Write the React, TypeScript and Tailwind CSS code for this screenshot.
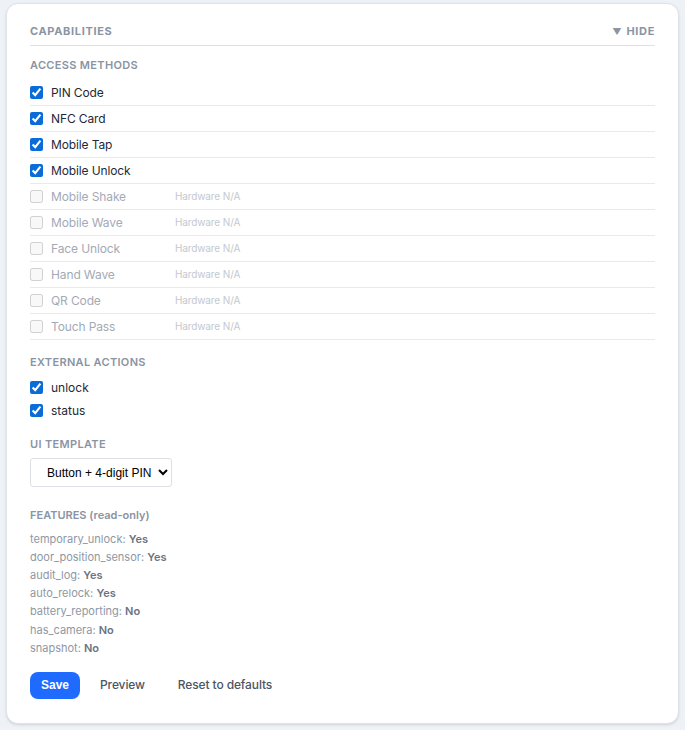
import React from "react";

const methods = [
  { name: "PIN Code", on: true },
  { name: "NFC Card", on: true },
  { name: "Mobile Tap", on: true },
  { name: "Mobile Unlock", on: true },
  { name: "Mobile Shake", on: false },
  { name: "Mobile Wave", on: false },
  { name: "Face Unlock", on: false },
  { name: "Hand Wave", on: false },
  { name: "QR Code", on: false },
  { name: "Touch Pass", on: false },
];

const features = [
  ["temporary_unlock", "Yes"],
  ["door_position_sensor", "Yes"],
  ["audit_log", "Yes"],
  ["auto_relock", "Yes"],
  ["battery_reporting", "No"],
  ["has_camera", "No"],
  ["snapshot", "No"],
];

function SectionTitle({ children }: { children: React.ReactNode }) {
  return (
    <div className="text-[11px] font-semibold uppercase tracking-[0.03em] text-[#8a94a3]">
      {children}
    </div>
  );
}

export default function App() {
  return (
    <div
      className="min-h-[730px] bg-[#eef1f6] px-[6px] pt-[3px] pb-[6px]"
      style={{ fontFamily: "Inter, 'Noto Sans', sans-serif" }}
    >
      <div className="rounded-xl border border-[#dfe3ea] bg-white px-[23px] pt-[19px] pb-[24px] shadow-sm">
        <div className="flex items-center justify-between border-b border-[#dde1e7] pb-[5px]">
          <div className="text-[11px] font-bold uppercase tracking-[0.06em] text-[#8a94a3]">
            Capabilities
          </div>
          <button className="text-[11px] font-bold uppercase tracking-[0.06em] text-[#8a94a3]">
            <span className="mr-1 text-[9px]">▼</span>Hide
          </button>
        </div>

        <div className="mt-[11px]">
          <SectionTitle>Access methods</SectionTitle>
          <div className="mt-[7px]">
            {methods.map((m) => (
              <label
                key={m.name}
                className="flex h-[26px] items-center border-b border-[#e6e9ee] text-[12px] tracking-[-0.01em]"
              >
                <input
                  type="checkbox"
                  defaultChecked={m.on}
                  disabled={!m.on}
                  className="m-0 h-[13px] w-[13px] accent-[#0b6bd8]"
                />
                <span
                  className={
                    "ml-2 w-[124px] " + (m.on ? "text-[#1f2937]" : "text-[#a3aab5]")
                  }
                >
                  {m.name}
                </span>
                {!m.on && (
                  <span className="text-[10px] text-[#c3c8d0]">Hardware N/A</span>
                )}
              </label>
            ))}
          </div>
        </div>

        <div className="mt-[14px]">
          <SectionTitle>External actions</SectionTitle>
          <div className="mt-[9px] flex flex-col gap-[7px]">
            {["unlock", "status"].map((a) => (
              <label key={a} className="flex h-[16px] items-center text-[12px] text-[#1f2937]">
                <input
                  type="checkbox"
                  defaultChecked
                  className="m-0 h-[13px] w-[13px] accent-[#0b6bd8]"
                />
                <span className="ml-2">{a}</span>
              </label>
            ))}
          </div>
        </div>

        <div className="mt-[17px]">
          <SectionTitle>UI template</SectionTitle>
          <select
            defaultValue="pin"
            className="mt-[6px] h-[29px] rounded-[3px] border border-[#dcdfe4] bg-white pl-[12px] pr-[3px] text-[12px] text-black"
            style={{ fontFamily: "'Liberation Sans', Arial, sans-serif" }}
          >
            <option value="pin">Button + 4-digit PIN</option>
          </select>
        </div>

        <div className="mt-[20px]">
          <div className="text-[11px] font-semibold text-[#8a94a3]">FEATURES (read-only)</div>
          <div className="mt-[6px] flex flex-col text-[11px] leading-[18.2px] text-[#8f97a3]">
            {features.map(([k, v]) => (
              <div key={k}>
                {k}: <span className="font-semibold text-[#6b7483]">{v}</span>
              </div>
            ))}
          </div>
        </div>

        <div className="mt-[15px] flex items-center">
          <button
            className="h-[27px] rounded-lg bg-[#1f6bff] px-[11px] text-[12px] font-bold text-white"
            style={{ fontFamily: "'Liberation Sans', Arial, sans-serif" }}
          >
            Save
          </button>
          <button className="ml-[20px] text-[12px] font-medium tracking-[-0.01em] text-[#4b5563]">
            Preview
          </button>
          <button className="ml-[33px] text-[12px] font-medium tracking-[-0.01em] text-[#4b5563]">
            Reset to defaults
          </button>
        </div>
      </div>
    </div>
  );
}
